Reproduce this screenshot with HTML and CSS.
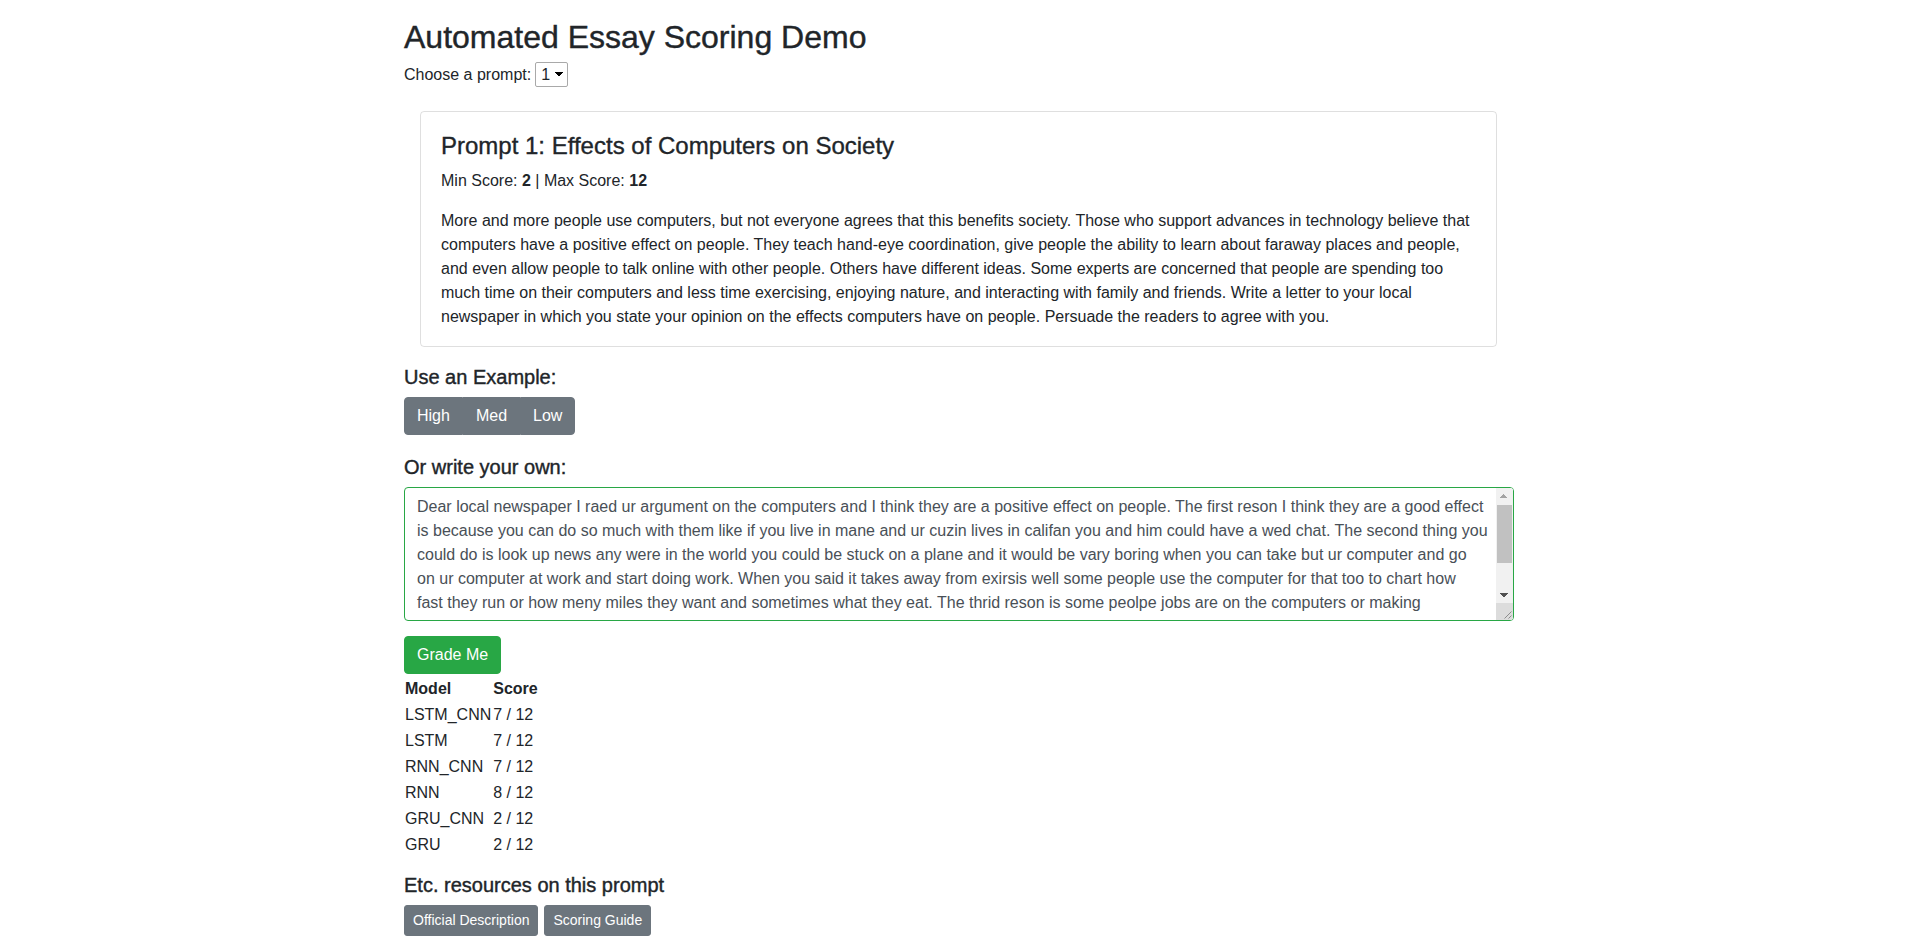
FILE: index.html
```html
<!DOCTYPE html>
<html lang="en">
<head>
<meta charset="utf-8">
<title>Automated Essay Scoring Demo</title>
<link rel="stylesheet" href="styles.css">
</head>
<body>
<div class="container">
  <h2 class="title">Automated Essay Scoring Demo</h2>
  <div class="prompt-picker">
    <label for="prompt" class="picker-label">Choose a prompt:</label>
    <select id="prompt" class="picker">
      <option selected>1</option>
      <option>2</option>
      <option>3</option>
      <option>4</option>
      <option>5</option>
      <option>6</option>
      <option>7</option>
      <option>8</option>
    </select>
  </div>

  <div class="card">
    <h4 class="card-title">Prompt 1: Effects of Computers on Society</h4>
    <p class="scores">Min Score: <b>2</b> | Max Score: <b>12</b></p>
    <p class="prompt-text">More and more people use computers, but not everyone agrees that this benefits society. Those who support advances in technology believe that computers have a positive effect on people. They teach hand-eye coordination, give people the ability to learn about faraway places and people, and even allow people to talk online with other people. Others have different ideas. Some experts are concerned that people are spending too much time on their computers and less time exercising, enjoying nature, and interacting with family and friends. Write a letter to your local newspaper in which you state your opinion on the effects computers have on people. Persuade the readers to agree with you.</p>
  </div>

  <h5 class="section-title section-title--example">Use an Example:</h5>
  <div class="btn-group">
    <button class="btn btn-secondary">High</button>
    <button class="btn btn-secondary">Med</button>
    <button class="btn btn-secondary">Low</button>
  </div>

  <h5 class="section-title section-title--write">Or write your own:</h5>
  <div class="essay-wrap">
    <textarea class="essay" rows="5">Dear local newspaper I raed ur argument on the computers and I think they are a positive effect on people. The first reson I think they are a good effect
is because you can do so much with them like if you live in mane and ur cuzin lives in califan you and him could have a wed chat. The second thing you
could do is look up news any were in the world you could be stuck on a plane and it would be vary boring when you can take but ur computer and go
on ur computer at work and start doing work. When you said it takes away from exirsis well some people use the computer for that too to chart how
fast they run or how meny miles they want and sometimes what they eat. The thrid reson is some peolpe jobs are on the computers or making
computers for exsample people that work for dell, apple or toshiba and they need there computers to do there jobs. So that is why I think computers are a good effect on people and I hope you agree with me. Thank you for reading my letter.</textarea>
    <div class="scrollbar" aria-hidden="true">
      <span class="sb-btn sb-up"></span>
      <span class="sb-track"><span class="sb-thumb"></span></span>
      <span class="sb-btn sb-down"></span>
      <span class="sb-corner">
        <svg width="17" height="17" viewBox="0 0 17 17"><path d="M15.5 8.5 L8.5 15.5 M15.5 12.5 L12.5 15.5" stroke="#8c8c8c" stroke-width="1" fill="none"/></svg>
      </span>
    </div>
  </div>

  <div class="grade-row">
    <button class="btn btn-success">Grade Me</button>
  </div>

  <table class="results">
    <thead>
      <tr><th>Model</th><th>Score</th></tr>
    </thead>
    <tbody>
      <tr><td>LSTM_CNN</td><td>7 / 12</td></tr>
      <tr><td>LSTM</td><td>7 / 12</td></tr>
      <tr><td>RNN_CNN</td><td>7 / 12</td></tr>
      <tr><td>RNN</td><td>8 / 12</td></tr>
      <tr><td>GRU_CNN</td><td>2 / 12</td></tr>
      <tr><td>GRU</td><td>2 / 12</td></tr>
    </tbody>
  </table>

  <h5 class="section-title section-title--etc">Etc. resources on this prompt</h5>
  <div class="resources">
    <a class="btn btn-sm btn-secondary" href="#">Official Description</a>
    <a class="btn btn-sm btn-secondary" href="#">Scoring Guide</a>
  </div>
</div>
</body>
</html>
```

FILE: styles.css
```css
* {
  box-sizing: border-box;
}

body {
  margin: 0;
  font-family: "Liberation Sans", Arial, sans-serif;
  font-size: 16px;
  line-height: 1.5;
  color: #212529;
  background: #fff;
}

.container {
  width: 1110px;
  margin: 0 auto;
  padding-top: 18px;
}

.title {
  font-size: 32px;
  line-height: 1.2;
  font-weight: 400;
  -webkit-text-stroke: 0.4px #212529;
  margin: 0 0 6px;
}

.prompt-picker {
  display: flex;
  align-items: center;
  height: 25px;
}

.picker-label {
  line-height: 24px;
}

.picker {
  -webkit-appearance: none;
  appearance: none;
  margin: 0 0 0 4px;
  width: 33px;
  height: 25px;
  padding: 0 0 0 5px;
  border: 1px solid #a9a9a9;
  border-radius: 2px;
  font: inherit;
  font-size: 16px;
  color: #212529;
  background-color: #fff;
  background-image:
    linear-gradient(to top right, transparent 50%, #000 50%),
    linear-gradient(to top left, transparent 50%, #000 50%);
  background-size: 4px 5px, 4px 5px;
  background-position: 19px 9px, 23px 9px;
  background-repeat: no-repeat;
  outline: none;
}

.card {
  margin: 24px 17px 0 16px;
  border: 1px solid rgba(0, 0, 0, 0.125);
  border-radius: 4px;
  padding: 20px 20px 17px;
}

.card-title {
  font-size: 24px;
  line-height: 1.2;
  font-weight: 400;
  -webkit-text-stroke: 0.35px #212529;
  margin: 0 0 8px;
}

.scores {
  margin: 0 0 16px;
}

.prompt-text {
  margin: 0;
}

.section-title {
  font-size: 20px;
  line-height: 1.2;
  font-weight: 400;
  -webkit-text-stroke: 0.4px #212529;
  margin: 18px 0 8px;
}

.section-title--write {
  margin-top: 20px;
}

.section-title--etc {
  margin-top: 15px;
}

.btn {
  display: inline-block;
  font-family: inherit;
  font-size: 16px;
  line-height: 24px;
  font-weight: 400;
  padding: 6px 12px;
  border: 1px solid transparent;
  border-radius: 4px;
  color: #fff;
  text-decoration: none;
  text-align: center;
  cursor: pointer;
  margin: 0;
}

.btn-secondary {
  background: #6c757d;
  border-color: #6c757d;
}

.btn-success {
  background: #28a745;
  border-color: #28a745;
}

.btn-sm {
  font-size: 14px;
  line-height: 21px;
  padding: 4px 8px;
  border-radius: 3px;
}

.btn-group {
  display: flex;
  width: max-content;
}

.btn-group .btn {
  border-radius: 0;
}

.btn-group .btn:first-child {
  border-radius: 4px 0 0 4px;
}

.btn-group .btn:last-child {
  border-radius: 0 4px 4px 0;
}

.essay-wrap {
  position: relative;
}

.essay {
  display: block;
  width: 100%;
  height: 134px;
  margin: 0;
  padding: 7px 20px 5px 12px;
  border: 1px solid #28a745;
  border-radius: 4px;
  font-family: inherit;
  font-size: 16px;
  line-height: 24px;
  color: #495057;
  background: #fff;
  resize: vertical;
  overflow: hidden;
  outline: none;
}

.scrollbar {
  position: absolute;
  top: 1px;
  right: 1px;
  bottom: 1px;
  width: 17px;
  display: flex;
  flex-direction: column;
  background: #f1f1f1;
  border-top-right-radius: 3px;
  border-bottom-right-radius: 3px;
  overflow: hidden;
}

.sb-btn {
  flex: 0 0 17px;
  background-color: #f1f1f1;
  background-repeat: no-repeat;
  background-size: 4px 4px, 4px 4px;
}

.sb-up {
  background-image:
    linear-gradient(to bottom right, transparent 50%, #a3a3a3 50%),
    linear-gradient(to bottom left, transparent 50%, #a3a3a3 50%);
  background-position: 4px 6px, 8px 6px;
}

.sb-down {
  background-image:
    linear-gradient(to top right, transparent 50%, #505050 50%),
    linear-gradient(to top left, transparent 50%, #505050 50%);
  background-position: 4px 7px, 8px 7px;
}

.sb-track {
  flex: 1 1 auto;
  display: flex;
  flex-direction: column;
  background: #f1f1f1;
}

.sb-thumb {
  flex: 0 0 58px;
  margin: 0 1px;
  background: #c1c1c1;
}

.sb-corner {
  flex: 0 0 17px;
  display: block;
  background: #dcdcdc;
}

.sb-corner svg {
  display: block;
}

.grade-row {
  display: flex;
  margin-top: 15px;
}

.results {
  border-collapse: collapse;
  margin-top: 2px;
}

.results th,
.results td {
  padding: 1px;
  text-align: left;
  line-height: 24px;
}

.results th {
  font-weight: 700;
}

.resources {
  display: flex;
  gap: 6px;
}
```
